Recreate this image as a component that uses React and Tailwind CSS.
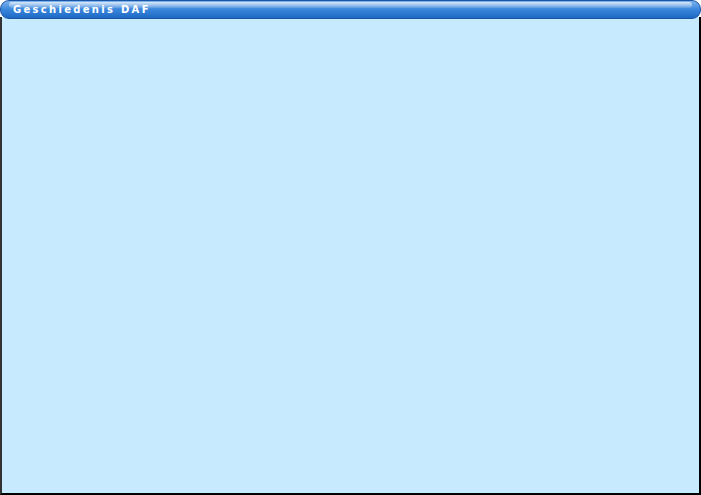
export default function App() {
  return (
    <div className="w-[701px] h-[495px] flex flex-col bg-white" style={{fontFamily: '"DejaVu Sans", sans-serif'}}>
      <div className="relative h-[19px] rounded-[9px] border border-[#1b55a8] bg-gradient-to-b from-[#7db3ec] via-[#3a86dc] to-[#1d68c4] flex items-center px-[12px] z-10 overflow-hidden">
        <div className="absolute left-[8px] right-[8px] top-[1px] h-[6px] rounded-full bg-gradient-to-b from-white/70 to-white/10" />
        <span className="relative text-white text-[10px] font-bold tracking-[2.3px] leading-none">Geschiedenis DAF</span>
      </div>
      <div className="flex-1 -mt-[2px] bg-[#c7eafe] border-l-2 border-l-[#333] border-r-2 border-r-black border-b-2 border-b-black" />
    </div>
  );
}
